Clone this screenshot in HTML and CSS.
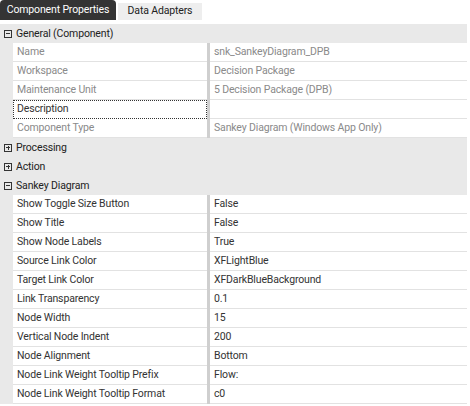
FILE: index.html
```html
<!DOCTYPE html>
<html>
<head>
<meta charset="utf-8">
<link rel="stylesheet" href="styles.css">
</head>
<body>
<div class="tabs">
  <div class="tab active">Component Properties</div>
  <div class="tab">Data Adapters</div>
</div>
<div class="grid">
  <div class="cat"><span class="exp minus"></span>General (Component)</div>
  <div class="row dis"><div class="lbl">Name</div><div class="sep"></div><div class="val">snk_SankeyDiagram_DPB</div></div>
  <div class="row dis"><div class="lbl">Workspace</div><div class="sep"></div><div class="val">Decision Package</div></div>
  <div class="row dis"><div class="lbl">Maintenance Unit</div><div class="sep"></div><div class="val">5 Decision Package (DPB)</div></div>
  <div class="row"><div class="lbl focus">Description</div><div class="sep"></div><div class="val"></div></div>
  <div class="row dis"><div class="lbl">Component Type</div><div class="sep"></div><div class="val">Sankey Diagram (Windows App Only)</div></div>
  <div class="cat"><span class="exp plus"></span>Processing</div>
  <div class="cat"><span class="exp plus"></span>Action</div>
  <div class="cat"><span class="exp minus"></span>Sankey Diagram</div>
  <div class="row"><div class="lbl">Show Toggle Size Button</div><div class="sep"></div><div class="val">False</div></div>
  <div class="row"><div class="lbl">Show Title</div><div class="sep"></div><div class="val">False</div></div>
  <div class="row"><div class="lbl">Show Node Labels</div><div class="sep"></div><div class="val">True</div></div>
  <div class="row"><div class="lbl">Source Link Color</div><div class="sep"></div><div class="val">XFLightBlue</div></div>
  <div class="row"><div class="lbl">Target Link Color</div><div class="sep"></div><div class="val">XFDarkBlueBackground</div></div>
  <div class="row"><div class="lbl">Link Transparency</div><div class="sep"></div><div class="val">0.1</div></div>
  <div class="row"><div class="lbl">Node Width</div><div class="sep"></div><div class="val">15</div></div>
  <div class="row"><div class="lbl">Vertical Node Indent</div><div class="sep"></div><div class="val">200</div></div>
  <div class="row"><div class="lbl">Node Alignment</div><div class="sep"></div><div class="val">Bottom</div></div>
  <div class="row"><div class="lbl">Node Link Weight Tooltip Prefix</div><div class="sep"></div><div class="val">Flow:</div></div>
  <div class="row"><div class="lbl">Node Link Weight Tooltip Format</div><div class="sep"></div><div class="val">c0</div></div>
</div>
</body>
</html>
```
FILE: styles.css
```css
* { box-sizing: border-box; }
body {
  margin: 0;
  background: #fff;
  font-family: Roboto, "Open Sans", sans-serif;
  font-size: 10.5px;
  letter-spacing: -0.15px;
  color: #333;
}
.tabs {
  display: flex;
  align-items: flex-end;
  height: 20px;
  gap: 2px;
}
.tab {
  width: 84px;
  height: 17px;
  line-height: 16px;
  text-align: center;
  background: #eeeeee;
  color: #222;
}
.tab.active {
  width: 116px;
  height: 20px;
  line-height: 19px;
  background: #343434;
  color: #fff;
  border-radius: 4px 4px 0 0;
}
.grid {
  margin-top: 4px;
  width: 467px;
  background: #e9e9e9;
}
.cat {
  height: 19px;
  display: flex;
  align-items: center;
  padding-left: 4px;
  color: #222;
  background: #e9e9e9;
}
.exp {
  width: 8px;
  height: 8px;
  border: 1px solid #333;
  margin-right: 4px;
  position: relative;
  flex: none;
}
.exp::before {
  content: "";
  position: absolute;
  left: 1px;
  top: 2.5px;
  width: 4px;
  height: 1px;
  background: #333;
}
.exp.plus::after {
  content: "";
  position: absolute;
  left: 2.5px;
  top: 1px;
  width: 1px;
  height: 4px;
  background: #333;
}
.exp.plus { border-width: 1.5px; }
.row {
  height: 19px;
  display: grid;
  grid-template-columns: 194px 3px 1fr;
  margin-left: 13px;
}
.lbl, .val {
  background: #fff;
  border-bottom: 1px solid #e2e2e2;
  padding-left: 4px;
  line-height: 18px;
  white-space: nowrap;
  overflow: hidden;
}
.val { padding-left: 4px; }
.sep { background: #cfcfcf; }
.dis .lbl, .dis .val { color: #8a8a8a; }
.lbl.focus {
  border: 1px dotted #333;
  line-height: 16px;
  padding-left: 3px;
}
```
